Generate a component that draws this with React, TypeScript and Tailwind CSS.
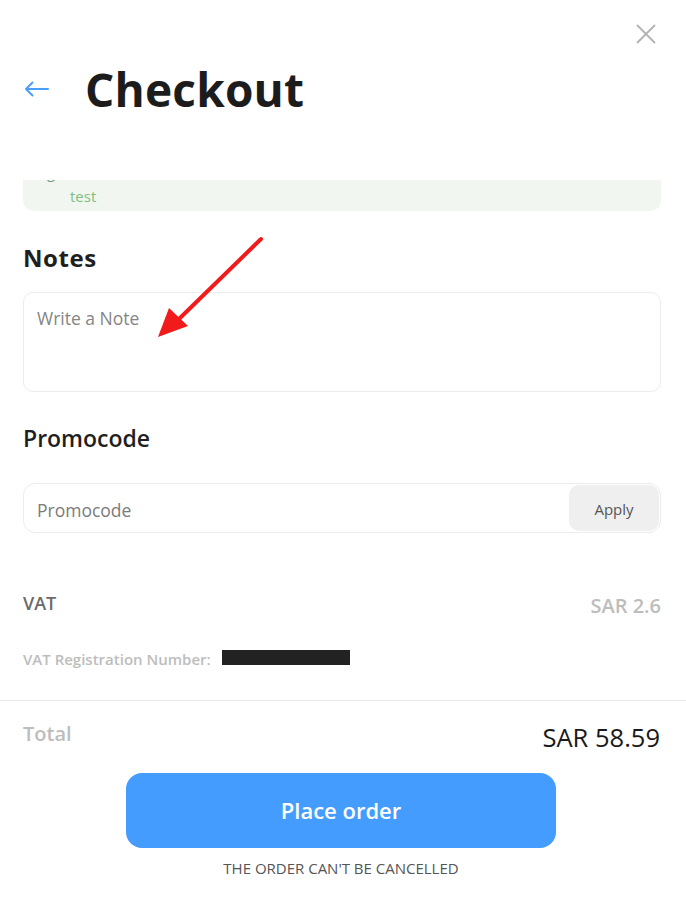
import React from "react";

export default function App() {
  return (
    <div className="relative w-[686px] h-[897px] overflow-hidden bg-white font-['Open_Sans',sans-serif] flex flex-col">
      {/* close */}
      <div className="flex justify-end pt-[24px] pr-[30px]">
        <svg width="20" height="20" viewBox="0 0 20 20" fill="none">
          <path d="M1.5 1.5 L18.5 18.5 M18.5 1.5 L1.5 18.5" stroke="#b3b3b3" strokeWidth="1.8" strokeLinecap="round" />
        </svg>
      </div>

      {/* title row */}
      <div className="flex items-center h-[62px] mt-[14px] pl-[24px]">
        <svg width="25" height="16" viewBox="0 0 25 16" fill="none" className="shrink-0">
          <path d="M24 8 H2 M8.5 1.5 L2 8 L8.5 14.5" stroke="#4b9ef8" strokeWidth="2" strokeLinecap="round" strokeLinejoin="round" />
        </svg>
        <h1 className="ml-[36px] text-[46px] leading-[62px] font-bold text-[#1c1c1c] tracking-[0.2px]">Checkout</h1>
      </div>

      {/* scrolled content (green info box, top cut off) */}
      <div className="mt-[60px] ml-[23px] mr-[25px] h-[31px] overflow-hidden rounded-b-[10px]">
        <div className="-mt-[28px] bg-[#f1f7f0] rounded-[10px] pt-[10px] pb-[5px]">
          <div className="pl-[24px] text-[15px] leading-[20px] text-[#7a9a7c]">g</div>
          <div className="mt-[4px] pl-[47px] text-[15px] leading-[20px] text-[#7fbf80]">test</div>
        </div>
      </div>

      {/* Notes */}
      <div className="ml-[23px] mr-[25px] flex flex-col">
        <h2 className="mt-[31px] text-[24px] leading-[32px] font-bold text-[#1f1f1f] tracking-[0.6px]">Notes</h2>
        <textarea
          placeholder="Write a Note"
          className="mt-[18px] h-[100px] w-full resize-none rounded-[10px] border border-[#ececec] bg-white pl-[13px] pt-[13px] text-[17.5px] leading-[24px] text-[#333] placeholder:text-[#858585] outline-none"
        />

        <h2 className="mt-[30px] text-[23px] leading-[32px] font-semibold text-[#1f1f1f]">Promocode</h2>

        <div className="mt-[29px] h-[50px] flex items-center rounded-[12px] border border-[#ececec] bg-white">
          <div className="flex-1 pl-[13px] pt-[3px] text-[17.5px] leading-[24px] text-[#7b7b7b]">Promocode</div>
          <button className="mr-[1px] h-[46px] w-[90px] rounded-[10px] bg-[#efefef] pt-[3px] text-[15px] text-[#555] flex items-center justify-center">
            Apply
          </button>
        </div>

        {/* VAT */}
        <div className="mt-[58px] flex items-start justify-between">
          <span className="text-[18px] leading-[24px] font-semibold text-[#6a6a6a]">VAT</span>
          <span className="mt-[3px] text-[20px] leading-[24px] font-semibold text-[#bdbdbd]">SAR 2.6</span>
        </div>

        <div className="mt-[31px] flex items-center">
          <span className="text-[15px] leading-[20px] font-semibold text-[#bdbdbd]">VAT Registration Number:</span>
          <span className="ml-[11px] -mt-[3px] h-[15px] w-[128px] bg-[#222]" />
        </div>
      </div>

      <div className="mt-[31px] h-px w-full bg-[#e9e9e9]" />

      {/* Total */}
      <div className="ml-[23px] mr-[26px] mt-[19px] flex items-start justify-between">
        <span className="text-[20px] leading-[28px] font-semibold text-[#bdbdbd]">Total</span>
        <span className="mt-[1px] text-[25.5px] leading-[32px] text-[#1a1a1a]">SAR 58.59</span>
      </div>

      <div className="ml-[126px] w-[430px] flex flex-col items-center">
        <button className="mt-[20px] h-[75px] w-[430px] rounded-[16px] bg-[#449dfe] text-white text-[22px] font-semibold flex items-center justify-center">
          Place order
        </button>
        <div className="mt-[10px] text-[15px] leading-[20px] text-[#555]">THE ORDER CAN'T BE CANCELLED</div>
      </div>

      {/* red annotation arrow */}
      <svg className="absolute left-0 top-0 pointer-events-none" width="686" height="897" viewBox="0 0 686 897">
        <line x1="261" y1="239" x2="180" y2="318" stroke="#f11b1b" strokeWidth="4" strokeLinecap="round" />
        <polygon points="158,337 169,308 188,326" fill="#f11b1b" />
      </svg>
    </div>
  );
}
